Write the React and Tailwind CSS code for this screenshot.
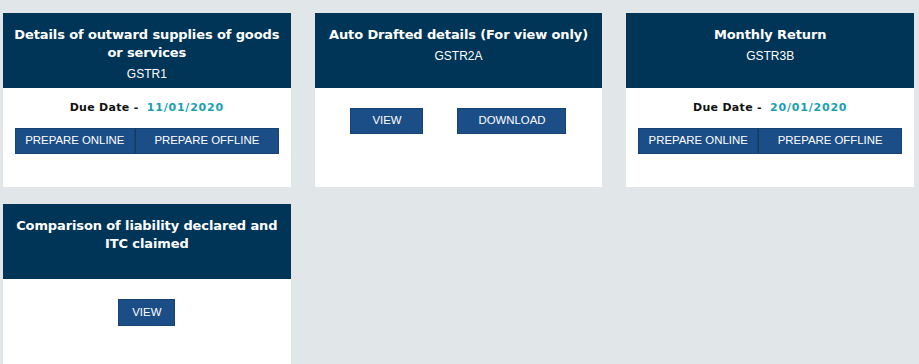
import React from "react";

const btn =
  "h-[26px] bg-[#1b4e87] border border-[#164374] text-white text-[11.4px] flex items-center justify-center";

const Card = ({ title, code, due, children }) => {
  return (
    <div className="bg-white h-[174px] flex flex-col">
      <div className="h-[75px] bg-[#003558] text-white text-center px-[5px] pt-[13px]">
        <h3 className="font-bold text-[13px] leading-[18px] tracking-[-0.12px] font-['DejaVu_Sans',sans-serif]">
          {title}
        </h3>
        {code && <p className="text-[12px] leading-[16px] mt-[4px]">{code}</p>}
      </div>
      <div className="pt-[20px] flex flex-col items-center">
        {due && (
          <p className="text-[11px] leading-[16px] -mt-[8px] mb-[12px] text-[#111] font-['DejaVu_Sans',sans-serif] tracking-[0.3px]">
            <span className="font-semibold">Due Date - </span>
            <span className="font-bold text-[#1a9fb0] ml-1 tracking-[0.8px]">{due}</span>
          </p>
        )}
        {children}
      </div>
    </div>
  );
};

const App = () => {
  return (
    <div className="min-h-[364px] bg-[#e1e6e9] pt-[13px] pl-[3px] pr-[5px] font-['Liberation_Sans',Arial,sans-serif]">
      <div className="grid grid-cols-3 gap-x-[24px] gap-y-[17px]">
        <Card title="Details of outward supplies of goods or services" code="GSTR1" due="11/01/2020">
          <div className="flex">
            <button className={`${btn} w-[120px]`}>PREPARE ONLINE</button>
            <button className={`${btn} w-[144px] border-l-[#123a66]`}>PREPARE OFFLINE</button>
          </div>
        </Card>
        <Card title="Auto Drafted details (For view only)" code="GSTR2A">
          <div className="flex gap-[34px]">
            <button className={`${btn} w-[73px]`}>VIEW</button>
            <button className={`${btn} w-[109px]`}>DOWNLOAD</button>
          </div>
        </Card>
        <Card title="Monthly Return" code="GSTR3B" due="20/01/2020">
          <div className="flex">
            <button className={`${btn} w-[120px]`}>PREPARE ONLINE</button>
            <button className={`${btn} w-[144px] border-l-[#123a66]`}>PREPARE OFFLINE</button>
          </div>
        </Card>
        <Card title="Comparison of liability declared and ITC claimed">
          <button className={`${btn} w-[57px] h-[27px]`}>VIEW</button>
        </Card>
      </div>
    </div>
  );
};

export default App;
